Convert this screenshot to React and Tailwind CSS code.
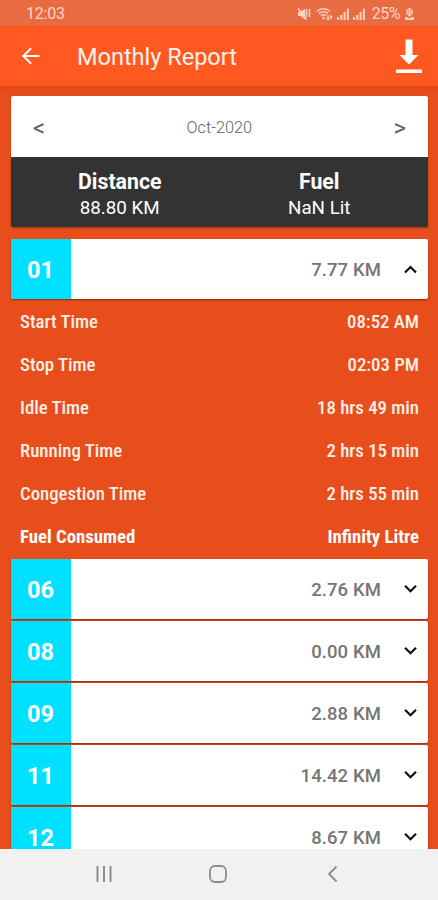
import React, { useState } from 'react';

const details = [
  { label: 'Start Time', value: '08:52 AM' },
  { label: 'Stop Time', value: '02:03 PM' },
  { label: 'Idle Time', value: '18 hrs 49 min' },
  { label: 'Running Time', value: '2 hrs 15 min' },
  { label: 'Congestion Time', value: '2 hrs 55 min' },
  { label: 'Fuel Consumed', value: 'Infinity Litre', bold: true },
];

const days = [
  { day: '01', distance: '7.77 KM' },
  { day: '06', distance: '2.76 KM' },
  { day: '08', distance: '0.00 KM' },
  { day: '09', distance: '2.88 KM' },
  { day: '11', distance: '14.42 KM' },
  { day: '12', distance: '8.67 KM' },
];

const SignalIcon = () => (
  <svg width="13" height="14" viewBox="0 0 13 14" fill="currentColor">
    <path d="M0 10h2v3H0zM3.3 8h2v5h-2zM6.6 5h2v8h-2zM9.9 1.5h2V13h-2z" />
  </svg>
);

const StatusBar = () => (
  <div className="flex h-[26px] shrink-0 items-center bg-[#e96b42] pt-[2px] pl-[26px] pr-[24px] text-[#ffd3c2]">
    <span className="text-[16px] leading-none tracking-[-0.2px]">12:03</span>
    <div className="ml-auto flex items-center">
      {/* vibrate / muted */}
      <svg className="mr-[5px]" width="14" height="14" viewBox="0 0 14 14" fill="none" stroke="currentColor" strokeWidth="1.5">
        <path d="M1 5h2.5L8 1.500v11L3.500 9H1z" fill="currentColor" stroke="none" />
        <path d="M1 1.500 9.500 12.500" />
        <path d="M10 2l-1 2 1 2-1 2 1 2M13 2l-1 2 1 2-1 2 1 2" strokeWidth="1.400" />
      </svg>
      {/* wifi */}
      <svg className="mr-[4px]" width="17" height="14" viewBox="0 0 17 14" fill="none" stroke="currentColor" strokeWidth="1.500">
        <path d="M1 4.300c3.800-3.400 9.200-3.400 13 0M3 6.600c2.600-2.400 6.400-2.400 9 0M5 8.900c1.500-1.400 3.500-1.400 5 0" />
        <path d="M7.500 9.500 9 11l-1.500 1.800L6 11z" fill="currentColor" stroke="none" />
        <path d="M12 8v4.500M10.700 11l1.300 1.500 1.300-1.500M15 12.500V9M13.900 10 15 8.700l1.200 1.300" strokeWidth="1.200" />
      </svg>
      <div className="mr-[6px] flex gap-[3px]">
        <SignalIcon />
        <SignalIcon />
      </div>
      <span className="mr-[5px] text-[16px] leading-none tracking-[-0.5px]">25%</span>
      {/* battery */}
      <svg width="9" height="13" viewBox="0 0 9 13" fill="currentColor">
        <path d="M3 0h3v1.500h2v6L6.800 6H5.500V3h-2v3H2.200L1 7.500v-6h2z" opacity=".7" />
        <path d="M3.700 3h1.600v3.500H7L4.500 9 2 6.500h1.700zM0 9h2l2.500 1.500L7 9h2v3H0z" />
      </svg>
    </div>
  </div>
);

const Header = () => (
  <header className="flex h-[60px] shrink-0 items-center bg-[#ff5921] pl-[22px] pr-[16px] text-white">
    <svg width="18" height="18" viewBox="0 0 18 18" fill="none" stroke="currentColor" strokeWidth="2">
      <path d="M17.500 9H1.500M9 1.200 1.300 9 9 16.800" />
    </svg>
    <h1 className="ml-[37px] pt-[4px] text-[23.5px] leading-none text-[#fff2ec]">Monthly Report</h1>
    <svg className="ml-auto" width="26" height="36" viewBox="0 0 26 36" fill="currentColor">
      <path d="M9.500 1.500h7v15.500H22.500L13 26.500 3.500 17h6zM0 31.500h26V35H0z" />
    </svg>
  </header>
);

const Chevron = ({ up }) => (
  <svg width="14" height="10" viewBox="0 0 14 10" fill="none" stroke="#111" strokeWidth="2.200">
    <path d={up ? 'M1 8.500 6.500 3 12 8.500' : 'M1 1.800 6.500 7.300 12 1.800'} />
  </svg>
);

const DayRow = ({ day, distance, open, onClick }) => (
  <button
    onClick={onClick}
    className="mb-[2px] flex h-[60px] w-full shrink-0 items-center overflow-hidden rounded-[2px] bg-white pr-[10px] shadow-[0_1px_2px_rgba(70,20,0,0.6)]"
  >
    <span className="flex h-full w-[60px] items-center justify-center bg-[#00e0ff] pt-[4px] pr-[1px] text-[23.5px] font-bold leading-none text-white">
      {day}
    </span>
    <span className="ml-auto mr-[23px] pt-[3px] text-[18.5px] font-medium leading-none tracking-[0.1px] text-[#757575]">{distance}</span>
    <Chevron up={open} />
  </button>
);

const DayDetails = () => (
  <div className="mb-[2px] h-[256px] shrink-0 pl-[9px] pr-[9px] [font-family:'Roboto_Condensed',Roboto,sans-serif] [font-stretch:75%]">
    {details.map((item) => (
      <div
        key={item.label}
        className={`flex h-[43px] items-center justify-between text-[18.8px] leading-none ${item.bold ? 'font-bold text-white' : 'font-medium text-[#fff0e8]'}`}
      >
        <span>{item.label}</span>
        <span>{item.value}</span>
      </div>
    ))}
  </div>
);

const NavBar = () => (
  <nav className="flex h-[51px] shrink-0 items-center bg-[#f1f1f1] pb-[2px] pl-[96px] text-[#8c8c8c]">
    <svg width="16" height="16" viewBox="0 0 16 16" fill="none" stroke="currentColor" strokeWidth="2">
      <path d="M1.500 0v16M8 0v16M14.500 0v16" />
    </svg>
    <svg className="ml-[97px]" width="18" height="18" viewBox="0 0 18 18" fill="none" stroke="currentColor" strokeWidth="1.800">
      <rect x="1" y="1" width="16" height="16" rx="5" />
    </svg>
    <svg className="ml-[100px]" width="11" height="18" viewBox="0 0 11 18" fill="none" stroke="currentColor" strokeWidth="1.800">
      <path d="M9.500 1.500 2 9l7.500 7.500" />
    </svg>
  </nav>
);

const App = () => {
  const [openDay, setOpenDay] = useState('01');

  return (
    <div className="flex h-[900px] w-[438px] flex-col overflow-hidden bg-[#e84e1b] [font-family:Roboto,sans-serif]">
      <StatusBar />
      <Header />
      <main className="flex min-h-0 flex-1 flex-col overflow-hidden bg-linear-to-b from-[#dc4817] to-[#e84e1b] to-[6px] pt-[10px] pl-[11px] pr-[10px]">
        {/* Month picker and totals */}
        <section className="mb-[12px] shrink-0 overflow-hidden rounded-[2px] shadow-[0_1px_2px_rgba(70,20,0,0.5)]">
          <div className="flex h-[61px] items-center justify-between bg-white pl-[22px] pr-[22px] text-[#616161]">
            <button className="pt-[3px] text-[24px] leading-none">&lt;</button>
            <span className="pt-[4px] text-[16.3px] font-light leading-none">Oct-2020</span>
            <button className="pt-[3px] text-[24px] leading-none">&gt;</button>
          </div>
          <div className="flex h-[70px] bg-[#333] pt-[12px] pr-[9px] text-center text-white">
            <div className="flex-1 pl-[9px]">
              <p className="text-[21.3px] font-bold leading-[26px]">Distance</p>
              <p className="text-[18.8px] leading-[27px]">88.80 KM</p>
            </div>
            <div className="flex-1">
              <p className="text-[21.3px] font-bold leading-[26px]">Fuel</p>
              <p className="text-[18.8px] leading-[27px]">NaN Lit</p>
            </div>
          </div>
        </section>

        {days.map((item) => (
          <React.Fragment key={item.day}>
            <DayRow
              day={item.day}
              distance={item.distance}
              open={openDay === item.day}
              onClick={() => setOpenDay(openDay === item.day ? '' : item.day)}
            />
            {openDay === item.day && <DayDetails />}
          </React.Fragment>
        ))}
      </main>
      <NavBar />
    </div>
  );
};

export default App;
